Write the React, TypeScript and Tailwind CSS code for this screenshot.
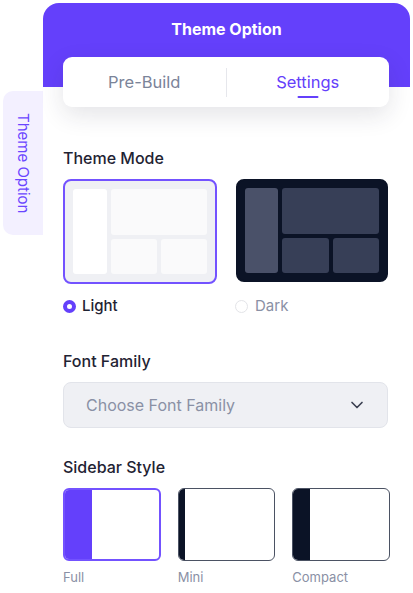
import React, { useState } from "react";
import { ChevronDown } from "lucide-react";

const font = { fontFamily: "Inter, 'Noto Sans', sans-serif" };

function LightPreview() {
  return (
    <div className="grid h-full grid-cols-[34px_1fr] grid-rows-[46px_1fr] gap-[4px]">
      <div className="row-span-2 rounded-[3px] bg-white" />
      <div className="rounded-[3px] bg-[#fafafb]" />
      <div className="grid grid-cols-2 gap-[4px]">
        <div className="rounded-[3px] bg-[#fafafb]" />
        <div className="rounded-[3px] bg-[#fafafb]" />
      </div>
    </div>
  );
}

function DarkPreview() {
  return (
    <div className="grid h-full grid-cols-[33px_1fr] grid-rows-[46px_1fr] gap-[4px]">
      <div className="row-span-2 rounded-[3px] bg-[#4a5169]" />
      <div className="rounded-[3px] bg-[#373f57]" />
      <div className="grid grid-cols-2 gap-[4px]">
        <div className="rounded-[3px] bg-[#373f57]" />
        <div className="rounded-[3px] bg-[#373f57]" />
      </div>
    </div>
  );
}

export default function App() {
  const [tab, setTab] = useState("settings");
  const [mode, setMode] = useState("light");
  const [sidebar, setSidebar] = useState("full");

  const sidebars = [
    { id: "full", label: "Full", stripe: "w-[27px] bg-[#6440fb]" },
    { id: "mini", label: "Mini", stripe: "w-[6px] bg-[#0b1326]" },
    { id: "compact", label: "Compact", stripe: "w-[17px] bg-[#0b1326]" },
  ];

  return (
    <div className="relative flex h-[593px] w-[413px] overflow-hidden bg-white" style={font}>
      {/* side tab */}
      <div className="ml-[3px] mt-[91px] flex h-[144px] w-[40px] items-center justify-center rounded-l-[10px] bg-[#f3f0ff]">
        <span className="text-[15px] leading-none text-[#6a45ff] [writing-mode:vertical-rl]">Theme Option</span>
      </div>

      <div className="mt-[3px] w-[367px]">
        <div className="h-[84px] rounded-t-[16px] bg-[#6440fb] pt-[15px] text-center text-[16px] font-bold leading-[22px] text-white">
          Theme Option
        </div>

        <div className="px-[20px]">
          {/* tabs */}
          <div className="relative -mt-[30px] flex h-[50px] w-[326px] items-center rounded-[9px] bg-white shadow-[0_8px_24px_rgba(30,30,60,0.12)]">
            <button
              onClick={() => setTab("prebuild")}
              className={`flex-1 text-center text-[16.5px] ${tab === "prebuild" ? "text-[#6440fb]" : "text-[#7b8499]"}`}
            >
              Pre-Build
            </button>
            <div className="h-[29px] w-px bg-[#e6e7ec]" />
            <button
              onClick={() => setTab("settings")}
              className={`relative flex-1 text-center text-[16.5px] ${tab === "settings" ? "text-[#6440fb]" : "text-[#7b8499]"}`}
            >
              Settings
              {tab === "settings" && (
                <span className="absolute left-1/2 top-[26px] h-[2px] w-[21px] -translate-x-1/2 rounded bg-[#6440fb]" />
              )}
            </button>
          </div>

          {/* theme mode */}
          <div className="mt-[41px] text-[16px] font-medium leading-[20px] text-[#1f2333]">Theme Mode</div>
          <div className="mt-[11px] grid grid-cols-2 gap-[19px]">
            <div>
              <button
                onClick={() => setMode("light")}
                className={`block h-[105px] w-full rounded-[8px] border-2 bg-[#eff0f4] p-[8px] ${mode === "light" ? "border-[#7352ff]" : "border-[#eff0f4]"}`}
              >
                <LightPreview />
              </button>
              <label className="mt-[14px] flex items-center gap-[6px] text-[15px] leading-[16px]" onClick={() => setMode("light")}>
                <span className={`h-[13px] w-[13px] rounded-full ${mode === "light" ? "border-[4px] border-[#6440fb]" : "border border-[#e3e4e8]"}`} />
                <span className={mode === "light" ? "font-medium text-[#1f2333]" : "text-[#8a90a5]"}>Light</span>
              </label>
            </div>
            <div>
              <button
                onClick={() => setMode("dark")}
                className={`block h-[103px] w-[152px] rounded-[8px] border-2 bg-[#0b1326] p-[7px] ${mode === "dark" ? "border-[#7352ff]" : "border-[#0b1326]"}`}
              >
                <DarkPreview />
              </button>
              <label className="-ml-[1px] mt-[16px] flex items-center gap-[7px] text-[15px] leading-[16px]" onClick={() => setMode("dark")}>
                <span className={`h-[13px] w-[13px] rounded-full ${mode === "dark" ? "border-[4px] border-[#6440fb]" : "border border-[#e3e4e8]"}`} />
                <span className={mode === "dark" ? "font-medium text-[#1f2333]" : "text-[#8a90a5]"}>Dark</span>
              </label>
            </div>
          </div>

          {/* font family */}
          <div className="mt-[37px] text-[16px] font-medium leading-[20px] text-[#1f2333]">Font Family</div>
          <div className="mt-[11px] flex h-[46px] w-[325px] items-center justify-between rounded-[8px] border border-[#e2e4ea] bg-[#eff0f4] pl-[22px] pr-[20px]">
            <span className="text-[16px] text-[#8a90a5]">Choose Font Family</span>
            <ChevronDown size={20} strokeWidth={2} className="text-[#3a3f50]" />
          </div>

          {/* sidebar style */}
          <div className="mt-[29px] text-[16px] font-medium leading-[20px] text-[#1f2333]">Sidebar Style</div>
          <div className="mt-[11px] grid grid-cols-3 gap-[17px]">
            {sidebars.map((s) => (
              <div key={s.id}>
                <button
                  onClick={() => setSidebar(s.id)}
                  className={`flex h-[73px] w-full overflow-hidden rounded-[6px] bg-white ${sidebar === s.id ? "border-2 border-[#7352ff]" : "border-[1.5px] border-[#4b5263]"}`}
                >
                  <div className={`h-full ${sidebar === s.id ? s.stripe.replace("bg-[#0b1326]", "bg-[#6440fb]") : s.stripe}`} />
                </button>
                <div className="mt-[8px] text-[13px] leading-[16px] text-[#8a90a5]">{s.label}</div>
              </div>
            ))}
          </div>
        </div>
      </div>
    </div>
  );
}
